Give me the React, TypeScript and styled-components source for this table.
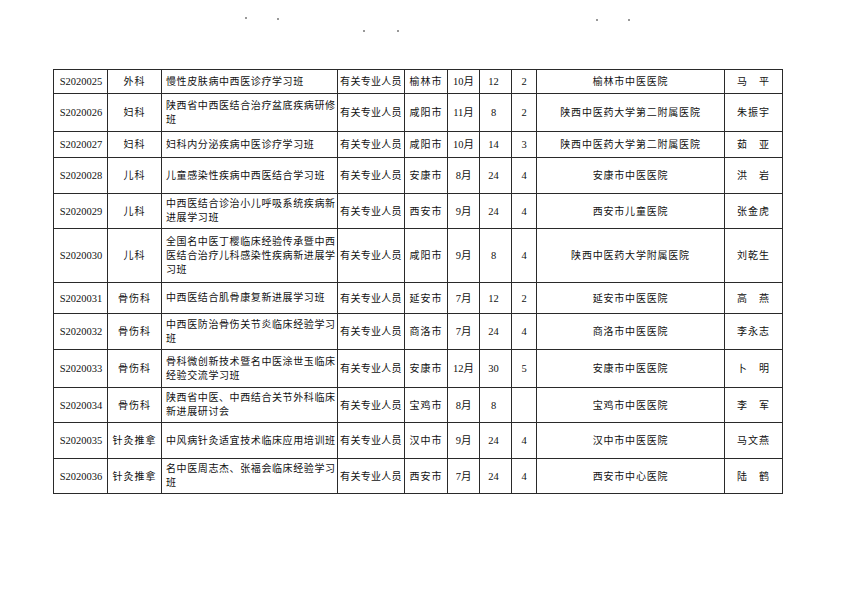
import React from 'react'
import styled, { createGlobalStyle } from 'styled-components'

const GlobalStyle = createGlobalStyle`
    html, body {
        margin: 0;
        padding: 0;
        background: #fff;
    }
    body {
        font-family: "Liberation Serif", "Noto Sans CJK SC", serif;
        color: #111;
    }
`

type Course = {
    id: string
    dept: string
    title: string
    city: string
    month: string
    hours: string
    credit: string
    host: string
    lead: string
    h: number
}

const courses: Course[] = [
    { id: 'S2020025', dept: '外科', title: '慢性皮肤病中西医诊疗学习班', city: '榆林市', month: '10月', hours: '12', credit: '2', host: '榆林市中医医院', lead: '马　平', h: 24 },
    { id: 'S2020026', dept: '妇科', title: '陕西省中西医结合治疗盆底疾病研修班', city: '咸阳市', month: '11月', hours: '8', credit: '2', host: '陕西中医药大学第二附属医院', lead: '朱振宇', h: 38 },
    { id: 'S2020027', dept: '妇科', title: '妇科内分泌疾病中医诊疗学习班', city: '咸阳市', month: '10月', hours: '14', credit: '3', host: '陕西中医药大学第二附属医院', lead: '茹　亚', h: 26 },
    { id: 'S2020028', dept: '儿科', title: '儿童感染性疾病中西医结合学习班', city: '安康市', month: '8月', hours: '24', credit: '4', host: '安康市中医医院', lead: '洪　岩', h: 36 },
    { id: 'S2020029', dept: '儿科', title: '中西医结合诊治小儿呼吸系统疾病新进展学习班', city: '西安市', month: '9月', hours: '24', credit: '4', host: '西安市儿童医院', lead: '张金虎', h: 35 },
    { id: 'S2020030', dept: '儿科', title: '全国名中医丁樱临床经验传承暨中西医结合治疗儿科感染性疾病新进展学习班', city: '咸阳市', month: '9月', hours: '8', credit: '4', host: '陕西中医药大学附属医院', lead: '刘乾生', h: 54 },
    { id: 'S2020031', dept: '骨伤科', title: '中西医结合肌骨康复新进展学习班', city: '延安市', month: '7月', hours: '12', credit: '2', host: '延安市中医医院', lead: '高　燕', h: 31 },
    { id: 'S2020032', dept: '骨伤科', title: '中西医防治骨伤关节炎临床经验学习班', city: '商洛市', month: '7月', hours: '24', credit: '4', host: '商洛市中医医院', lead: '李永志', h: 36 },
    { id: 'S2020033', dept: '骨伤科', title: '骨科微创新技术暨名中医涂世玉临床经验交流学习班', city: '安康市', month: '12月', hours: '30', credit: '5', host: '安康市中医医院', lead: '卜　明', h: 38 },
    { id: 'S2020034', dept: '骨伤科', title: '陕西省中医、中西结合关节外科临床新进展研讨会', city: '宝鸡市', month: '8月', hours: '8', credit: '', host: '宝鸡市中医医院', lead: '李　军', h: 35 },
    { id: 'S2020035', dept: '针灸推拿', title: '中风病针灸适宜技术临床应用培训班', city: '汉中市', month: '9月', hours: '24', credit: '4', host: '汉中市中医医院', lead: '马文燕', h: 36 },
    { id: 'S2020036', dept: '针灸推拿', title: '名中医周志杰、张福会临床经验学习班', city: '西安市', month: '7月', hours: '24', credit: '4', host: '西安市中心医院', lead: '陆　鹤', h: 35 },
]

const colWidths = [54, 54, 176, 67, 43, 32, 32, 25, 188, 58]

// scanner specks above the table
const specks = [
    { x: 245, y: 17 }, { x: 277, y: 18 },
    { x: 363, y: 30 }, { x: 397, y: 30 },
    { x: 596, y: 19 }, { x: 628, y: 19 },
]

export default function App() {
    return (
        <Page>
            <GlobalStyle />
            <Margin>
                {specks.map((s, i) => (
                    <Speck key={i} style={{ left: s.x, top: s.y }} />
                ))}
            </Margin>
            <Sheet>
                <Table>
                    <colgroup>
                        {colWidths.map((w, i) => <col key={i} style={{ width: w }} />)}
                    </colgroup>
                    <tbody>
                        {courses.map(c => (
                            <Row key={c.id} $h={c.h}>
                                <Cell $pad="0 0 0 1px">{c.id}</Cell>
                                <Cell $cjk $spacing={1}>{c.dept}</Cell>
                                <TitleCell>{c.title}</TitleCell>
                                <Cell $cjk $spacing={0.3}>有关专业人员</Cell>
                                <Cell $cjk $spacing={1}>{c.city}</Cell>
                                <Cell>{c.month}</Cell>
                                <Cell $pad="0 4px 0 0">{c.hours}</Cell>
                                <Cell>{c.credit}</Cell>
                                <Cell $cjk $spacing={0.8}>{c.host}</Cell>
                                <Cell $cjk $spacing={1}>{c.lead}</Cell>
                            </Row>
                        ))}
                    </tbody>
                </Table>
            </Sheet>
        </Page>
    )
}

const Page = styled.div`
    width: 842px;
    height: 596px;
    background: #fff;
    overflow: hidden;
`

const Margin = styled.div`
    position: relative;
    height: 69px;
`

const Speck = styled.span`
    position: absolute;
    width: 2px;
    height: 2px;
    background: #999;
`

const Sheet = styled.div`
    padding-left: 53px;
`

const Table = styled.table`
    table-layout: fixed;
    border-collapse: collapse;
    width: 729px;
    border: 1.5px solid #222;
`

const Row = styled.tr<{ $h: number }>`
    height: ${p => p.$h}px;
`

const Cell = styled.td<{ $align?: string; $pad?: string; $cjk?: boolean; $spacing?: number }>`
    border: 1px solid #2a2a2a;
    padding: ${p => p.$pad || '0'};
    text-align: ${p => p.$align || 'center'};
    vertical-align: middle;
    font-size: ${p => (p.$cjk ? '10px' : '10.5px')};
    letter-spacing: ${p => (p.$spacing ? `${p.$spacing}px` : '0')};
    line-height: 13px;
    white-space: nowrap;
    overflow: hidden;
`

const TitleCell = styled.td`
    border: 1px solid #2a2a2a;
    padding: 0 0 0 4px;
    text-align: left;
    vertical-align: middle;
    font-size: 10px;
    letter-spacing: 0.6px;
    line-height: 14px;
    word-break: break-all;
`
